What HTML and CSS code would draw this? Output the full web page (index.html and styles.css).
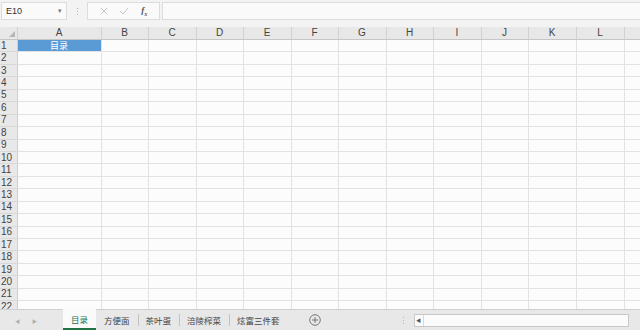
FILE: index.html
```html
<!DOCTYPE html>
<html lang="zh-CN">
<head>
  <meta charset="UTF-8" />
  <title>目录 - Excel</title>
  <link rel="stylesheet" href="styles.css">
</head>
<body>
  <div class="app">
    <!-- Formula bar -->
    <div class="formula-bar">
      <div class="name-box">
        <span>E10</span>
        <span class="caret">&#9662;</span>
      </div>
      <div class="grip"></div>
      <div class="fx-box">
        <svg class="fx-icon" width="8" height="8" viewBox="0 0 8 8"><path d="M1 1l6 6M7 1L1 7" stroke="#c6c6c6" stroke-width="1" fill="none"/></svg>
        <svg class="fx-icon" width="10" height="8" viewBox="0 0 10 8"><path d="M1 4l3 3 5-6" stroke="#c6c6c6" stroke-width="1" fill="none"/></svg>
        <span class="fx">f<sub>x</sub></span>
      </div>
      <div class="formula-input"></div>
    </div>

    <!-- Sheet grid -->
    <div class="sheet">
      <table class="grid">
        <colgroup>
          <col class="c-row"><col class="c-a">
          <col class="c-s"><col class="c-l"><col class="c-s"><col class="c-l"><col class="c-s"><col class="c-l">
          <col class="c-s"><col class="c-l"><col class="c-s"><col class="c-l"><col class="c-l"><col class="c-rest">
        </colgroup>
        <tr class="head">
          <th class="corner"><span class="tri"></span></th>
          <th>A</th><th>B</th><th>C</th><th>D</th><th>E</th><th>F</th><th>G</th><th>H</th><th>I</th><th>J</th><th>K</th><th>L</th><th></th>
        </tr>
        <tr><th>1</th><td class="selected">目录</td><td></td><td></td><td></td><td></td><td></td><td></td><td></td><td></td><td></td><td></td><td></td><td></td></tr>
        <tr><th>2</th><td></td><td></td><td></td><td></td><td></td><td></td><td></td><td></td><td></td><td></td><td></td><td></td><td></td></tr>
        <tr><th>3</th><td></td><td></td><td></td><td></td><td></td><td></td><td></td><td></td><td></td><td></td><td></td><td></td><td></td></tr>
        <tr><th>4</th><td></td><td></td><td></td><td></td><td></td><td></td><td></td><td></td><td></td><td></td><td></td><td></td><td></td></tr>
        <tr><th>5</th><td></td><td></td><td></td><td></td><td></td><td></td><td></td><td></td><td></td><td></td><td></td><td></td><td></td></tr>
        <tr><th>6</th><td></td><td></td><td></td><td></td><td></td><td></td><td></td><td></td><td></td><td></td><td></td><td></td><td></td></tr>
        <tr><th>7</th><td></td><td></td><td></td><td></td><td></td><td></td><td></td><td></td><td></td><td></td><td></td><td></td><td></td></tr>
        <tr><th>8</th><td></td><td></td><td></td><td></td><td></td><td></td><td></td><td></td><td></td><td></td><td></td><td></td><td></td></tr>
        <tr><th>9</th><td></td><td></td><td></td><td></td><td></td><td></td><td></td><td></td><td></td><td></td><td></td><td></td><td></td></tr>
        <tr><th>10</th><td></td><td></td><td></td><td></td><td></td><td></td><td></td><td></td><td></td><td></td><td></td><td></td><td></td></tr>
        <tr><th>11</th><td></td><td></td><td></td><td></td><td></td><td></td><td></td><td></td><td></td><td></td><td></td><td></td><td></td></tr>
        <tr><th>12</th><td></td><td></td><td></td><td></td><td></td><td></td><td></td><td></td><td></td><td></td><td></td><td></td><td></td></tr>
        <tr><th>13</th><td></td><td></td><td></td><td></td><td></td><td></td><td></td><td></td><td></td><td></td><td></td><td></td><td></td></tr>
        <tr><th>14</th><td></td><td></td><td></td><td></td><td></td><td></td><td></td><td></td><td></td><td></td><td></td><td></td><td></td></tr>
        <tr><th>15</th><td></td><td></td><td></td><td></td><td></td><td></td><td></td><td></td><td></td><td></td><td></td><td></td><td></td></tr>
        <tr><th>16</th><td></td><td></td><td></td><td></td><td></td><td></td><td></td><td></td><td></td><td></td><td></td><td></td><td></td></tr>
        <tr><th>17</th><td></td><td></td><td></td><td></td><td></td><td></td><td></td><td></td><td></td><td></td><td></td><td></td><td></td></tr>
        <tr><th>18</th><td></td><td></td><td></td><td></td><td></td><td></td><td></td><td></td><td></td><td></td><td></td><td></td><td></td></tr>
        <tr><th>19</th><td></td><td></td><td></td><td></td><td></td><td></td><td></td><td></td><td></td><td></td><td></td><td></td><td></td></tr>
        <tr><th>20</th><td></td><td></td><td></td><td></td><td></td><td></td><td></td><td></td><td></td><td></td><td></td><td></td><td></td></tr>
        <tr><th>21</th><td></td><td></td><td></td><td></td><td></td><td></td><td></td><td></td><td></td><td></td><td></td><td></td><td></td></tr>
        <tr><th>22</th><td></td><td></td><td></td><td></td><td></td><td></td><td></td><td></td><td></td><td></td><td></td><td></td><td></td></tr>
      </table>
    </div>

    <!-- Sheet tabs -->
    <div class="tab-bar">
      <div class="tab-nav">
        <span class="arrow">&#9664;</span>
        <span class="arrow">&#9654;</span>
      </div>
      <div class="tabs">
        <div class="tab active">目录</div>
        <div class="tab">方便面</div>
        <div class="tab">茶叶蛋</div>
        <div class="tab">涪陵榨菜</div>
        <div class="tab">炫富三件套</div>
      </div>
      <div class="add-sheet">
        <svg width="12" height="12" viewBox="0 0 12 12"><circle cx="6" cy="6" r="5.3" stroke="#777" fill="none"/><path d="M6 3v6M3 6h6" stroke="#777"/></svg>
      </div>
      <div class="grip small"></div>
      <div class="hscroll">
        <span class="scroll-left">&#9664;</span>
      </div>
    </div>
  </div>
</body>
</html>
```

FILE: styles.css
```css
body {
  margin: 0;
  background-color: #f3f3f3;
  font-family: "Liberation Sans", "Noto Sans CJK SC", sans-serif;
  overflow: hidden;
}

.app {
  width: 640px;
  height: 330px;
  display: flex;
  flex-direction: column;
}

/* formula bar */
.formula-bar {
  height: 27px;
  display: flex;
  align-items: flex-start;
  padding: 2px 0 0 1px;
  box-sizing: border-box;
  flex-shrink: 0;
}

.name-box {
  width: 66px;
  height: 18px;
  box-sizing: border-box;
  border: 1px solid #dcdcdc;
  background-color: #fafafa;
  display: flex;
  align-items: center;
  justify-content: space-between;
  padding: 0 4px 0 4px;
  font-size: 9px;
  color: #333;
}

.caret {
  font-size: 7px;
  color: #777;
}

.grip {
  width: 20px;
  height: 18px;
  flex-shrink: 0;
  position: relative;
}

.grip::before {
  content: "";
  position: absolute;
  left: 10px;
  top: 6px;
  width: 1px;
  height: 7px;
  background: repeating-linear-gradient(#b4b4b4 0 1px, transparent 1px 3px);
}

.fx-box {
  width: 73px;
  height: 18px;
  box-sizing: border-box;
  border: 1px solid #dcdcdc;
  background-color: #fafafa;
  display: flex;
  align-items: center;
  justify-content: space-around;
  padding: 0 6px;
}

.fx {
  font-family: "Liberation Serif", serif;
  font-style: italic;
  font-weight: bold;
  font-size: 9px;
  color: #555;
}

.fx sub {
  font-size: 6px;
}

.formula-input {
  flex: 1;
  height: 18px;
  margin-left: 2px;
  box-sizing: border-box;
  border: 1px solid #dcdcdc;
  border-right: none;
  background-color: #fafafa;
}

/* sheet */
.sheet {
  flex: 1;
  overflow: hidden;
  background-color: #fcfcfc;
}

.grid {
  border-collapse: collapse;
  table-layout: fixed;
  width: 640px;
}

.c-row { width: 17px; }
.c-a { width: 84px; }
.c-s { width: 47px; }
.c-l { width: 48px; }
.c-rest { width: 16px; }

.grid tr {
  height: 12.45px;
}

.grid td {
  border-right: 1px solid #e2e2e2;
  border-bottom: 1px solid #e2e2e2;
  padding: 0;
  font-size: 10px;
  line-height: 10px;
  text-align: center;
  overflow: hidden;
}

.grid th {
  background-color: #e8e8e8;
  font-weight: normal;
  font-size: 10px;
  line-height: 10px;
  color: #444;
  padding: 0;
  border-right: 1px solid #cfcfcf;
  border-bottom: 1px solid #d8d8d8;
  text-align: center;
}

.grid tr:not(.head) th {
  text-align: left;
  padding-left: 1px;
}

.grid .head th {
  height: 12px;
  border-bottom: 1px solid #c6c6c6;
  border-right: 1px solid #d2d2d2;
}

.grid .corner {
  position: relative;
}

.tri {
  position: absolute;
  right: 2px;
  bottom: 2px;
  width: 0;
  height: 0;
  border-left: 6px solid transparent;
  border-bottom: 6px solid #b7b7b7;
}

.grid td.selected {
  background-color: #5b9bd5;
  color: #fff;
  font-size: 9px;
}

/* sheet tabs */
.tab-bar {
  height: 21px;
  flex-shrink: 0;
  display: flex;
  align-items: center;
  background-color: #e8e8e8;
  border-top: 1px solid #d0d0d0;
  box-sizing: border-box;
  font-size: 8.5px;
}

.tab-nav {
  width: 63px;
  display: flex;
  gap: 12px;
  padding-left: 15px;
  box-sizing: border-box;
}

.arrow {
  font-size: 5px;
  color: #b0b0b0;
}

.tabs {
  display: flex;
  align-self: stretch;
}

.tab {
  display: flex;
  align-items: center;
  padding: 0 8px;
  color: #444;
  position: relative;
}

.tab + .tab::before {
  content: "";
  position: absolute;
  left: 0;
  top: 4px;
  bottom: 4px;
  border-left: 1px solid #c2c2c2;
}

.tab.active {
  background-color: #fafafa;
  color: #217346;
  padding: 0 8px;
  margin-top: -1px;
  border-bottom: 2px solid #217346;
}

.tab.active + .tab::before {
  display: none;
}

.add-sheet {
  margin-left: 21px;
  display: flex;
  align-items: center;
}

.grip.small {
  width: 20px;
  height: 21px;
  margin-left: 73px;
}

.grip.small::before {
  left: 9px;
  top: 7px;
}

.hscroll {
  width: 215px;
  height: 13px;
  box-sizing: border-box;
  border: 1px solid #c8c8c8;
  background-color: #fbfbfb;
  display: flex;
  align-items: center;
}

.scroll-left {
  font-size: 5px;
  color: #555;
  width: 8px;
  text-align: center;
  border-right: 1px solid #d8d8d8;
  line-height: 11px;
}
```
